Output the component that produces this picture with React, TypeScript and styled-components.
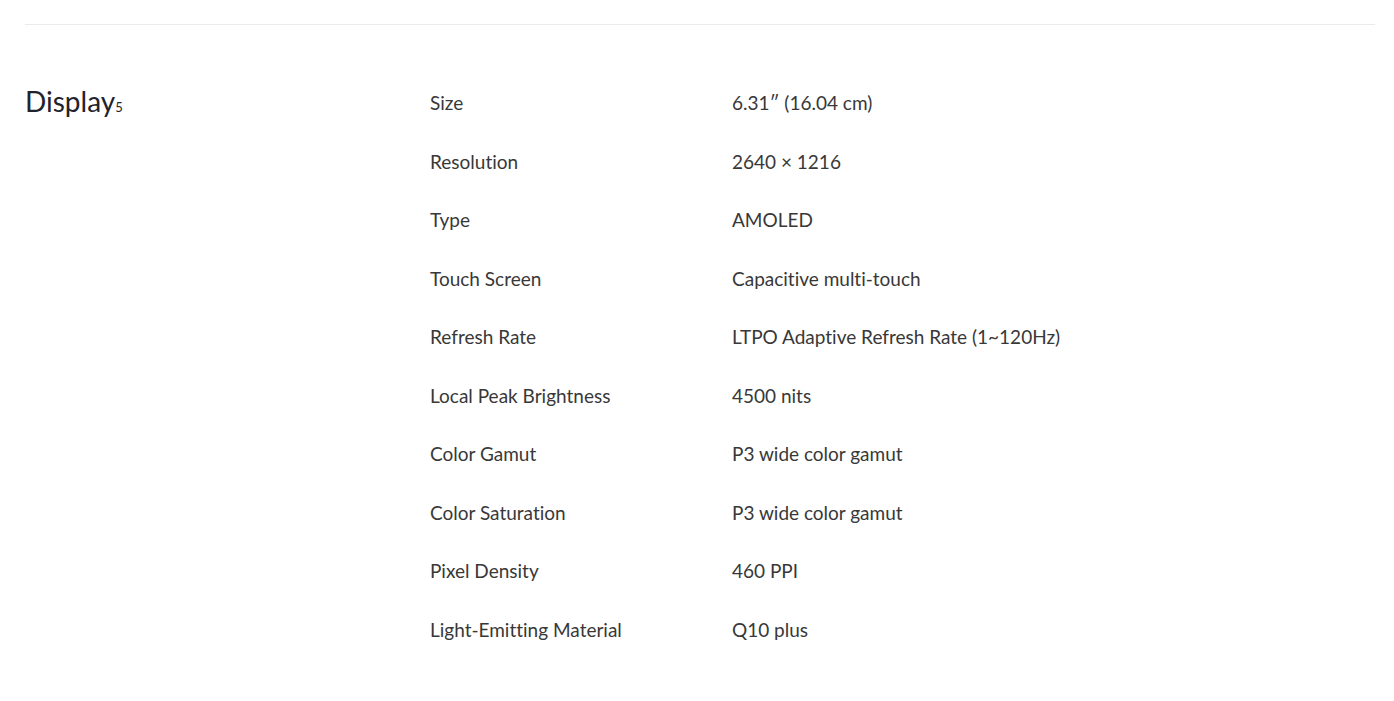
import React from 'react';
import styled, { createGlobalStyle } from 'styled-components';

const specs = [
  { label: 'Size', value: '6.31″ (16.04 cm)' },
  { label: 'Resolution', value: '2640 × 1216' },
  { label: 'Type', value: 'AMOLED' },
  { label: 'Touch Screen', value: 'Capacitive multi-touch' },
  { label: 'Refresh Rate', value: 'LTPO Adaptive Refresh Rate (1~120Hz)' },
  { label: 'Local Peak Brightness', value: '4500 nits' },
  { label: 'Color Gamut', value: 'P3 wide color gamut' },
  { label: 'Color Saturation', value: 'P3 wide color gamut' },
  { label: 'Pixel Density', value: '460 PPI' },
  { label: 'Light-Emitting Material', value: 'Q10 plus' },
];

function App() {
  return (
    <>
      <GlobalStyle />
      <Page>
        <Section>
          <Heading>
            Display<sup>5</sup>
          </Heading>
          <SpecList>
            {specs.map(spec => (
              <SpecRow key={spec.label}>
                <Label>{spec.label}</Label>
                <Value>{spec.value}</Value>
              </SpecRow>
            ))}
          </SpecList>
        </Section>
      </Page>
    </>
  );
}

const GlobalStyle = createGlobalStyle`
  body {
    margin: 0;
    background: #fff;
    font-family: Lato, "Noto Sans", sans-serif;
    font-variant-ligatures: none;
    color: #333;
  }
`;

const Page = styled.div`
  padding: 24px 19px 0 25px;
`;

const Section = styled.section`
  display: grid;
  grid-template-columns: 405px 1fr;
  border-top: 1px solid #ebebeb;
  padding-top: 64px;
`;

const Heading = styled.h2`
  margin: 0;
  margin-top: -5px;
  font-size: 28px;
  font-weight: 400;
  line-height: 34px;
  color: #1f232b;
  sup {
    font-size: 13px;
    vertical-align: baseline;
    margin-left: 0;
  }
`;

const SpecList = styled.div`
  display: flex;
  flex-direction: column;
  gap: 31.5px;
`;

const SpecRow = styled.div`
  display: grid;
  grid-template-columns: 302px 1fr;
  font-size: 19px;
  line-height: 27px;
`;

const Label = styled.span`
  color: #383838;
`;

const Value = styled.span`
  color: #383838;
`;

export default App;
